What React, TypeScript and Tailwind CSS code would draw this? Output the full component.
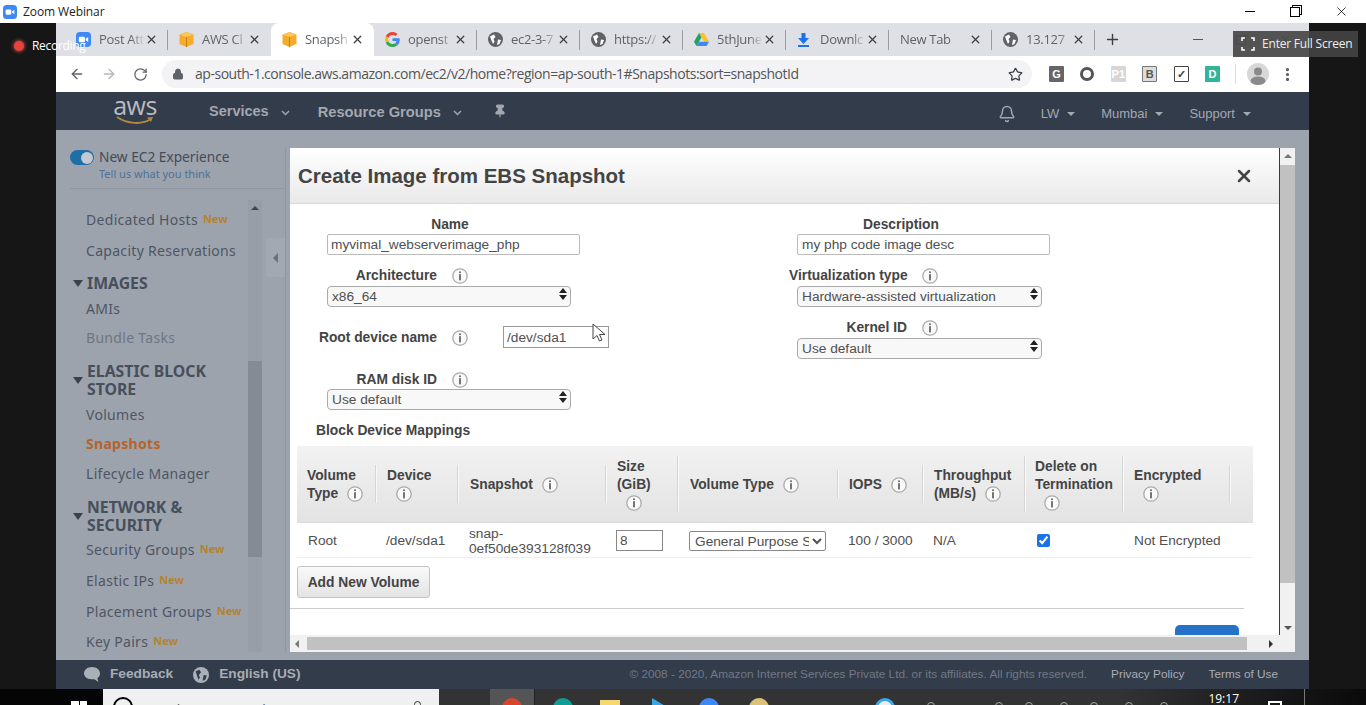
import React from "react";
import { ArrowLeft, ArrowRight, Bell, Lock, MoreVertical, Pin, Plus, RotateCw, Star, X } from "lucide-react";

const InfoIcon = () => (
    <svg width="16" height="16" viewBox="0 0 16 16" className="shrink-0">
        <circle cx="8" cy="8" r="7.2" fill="#fafafa" stroke="#aaa" strokeWidth="1.3" />
        <rect x="7.2" y="3.4" width="1.6" height="1.7" fill="#555" />
        <rect x="7.2" y="6.2" width="1.6" height="6.2" fill="#555" />
    </svg>
);

const Cube = () => (
    <svg width="15" height="17" viewBox="0 0 15 17" className="shrink-0">
        <path d="M7.5 1 14.5 3.5V13L7.5 16 .5 13V3.5Z" fill="#f5ab2c" />
        <path d="M.5 3.5 7.5 6 14.5 3.5 7.5 1Z" fill="#fbc55f" />
        <path d="M7 6h1v10H7z" fill="#c87f12" />
    </svg>
);

const GlobeIcon = () => (
    <svg width="15" height="15" viewBox="0 0 15 15" className="shrink-0">
        <circle cx="7.5" cy="7.5" r="7.5" fill="#5f6368" />
        <path d="M2 4.5 6 2.5 7.5 5 5.5 7 6.5 9.5 5 12 3.5 8.5ZM10 7.5l3 .5-1.5 4-2.5 1Z" fill="#fff" />
    </svg>
);

const ZoomIcon = ({ size }: { size: number }) => (
    <svg width={size} height={size} viewBox="0 0 16 16" className="shrink-0">
        <rect width="16" height="16" rx="4" fill="#3d8af7" />
        <rect x="3" y="5" width="6.5" height="6" rx="1.2" fill="#fff" />
        <path d="M10.3 7.3 13 5.3v5.4L10.3 8.7Z" fill="#fff" />
    </svg>
);

const GoogleIcon = () => (
    <svg width="15" height="15" viewBox="0 0 48 48" className="shrink-0">
        <path fill="#EA4335" d="M24 9.5c3.5 0 6.7 1.2 9.2 3.600l6.900-6.900C35.900 2.400 30.400 0 24 0 14.600 0 6.500 5.400 2.600 13.200l8 6.200C12.500 13.600 17.800 9.500 24 9.500z" />
        <path fill="#4285F4" d="M47 24.500c0-1.600-.1-3.100-.4-4.500H24v9h12.900c-.6 3-2.200 5.500-4.700 7.200l7.700 6C44.400 38 47 31.800 47 24.500z" />
        <path fill="#FBBC05" d="M10.600 28.600a14.500 14.500 0 0 1 0-9.200l-8-6.200a24 24 0 0 0 0 21.600z" />
        <path fill="#34A853" d="M24 48c6.500 0 11.900-2.100 15.900-5.800l-7.700-6c-2.200 1.400-4.900 2.300-8.200 2.300-6.200 0-11.500-4.100-13.400-9.900l-8 6.200C6.500 42.600 14.600 48 24 48z" />
    </svg>
);

const DriveIcon = () => (
    <svg width="15" height="14" viewBox="0 0 15 14" className="shrink-0">
        <path d="M5 0h5l5 8.800h-5Z" fill="#fbc02d" />
        <path d="M5 0 0 8.800 2.500 13 7.500 4.400Z" fill="#1ea362" />
        <path d="M2.500 13h10L15 8.800H5Z" fill="#4285f4" />
    </svg>
);

const DownloadIcon = () => (
    <svg width="13" height="14" viewBox="0 0 13 14" className="shrink-0">
        <path d="M4.500 0h4v5h3.500l-5.500 6L1 5h3.500Z" fill="#1a73e8" />
        <rect x="1" y="12" width="11" height="2" fill="#1a73e8" />
    </svg>
);

type TabInfo = { title: string; icon: React.ReactNode; active?: boolean; sep?: boolean };

// titles stop where the browser fades them out
const tabs: TabInfo[] = [
    { title: "Post Att", icon: <ZoomIcon size={15} />, sep: true },
    { title: "AWS Cl", icon: <Cube /> },
    { title: "Snapsh", icon: <Cube />, active: true },
    { title: "openst", icon: <GoogleIcon />, sep: true },
    { title: "ec2-3-7", icon: <GlobeIcon />, sep: true },
    { title: "https://", icon: <GlobeIcon />, sep: true },
    { title: "5thJune", icon: <DriveIcon />, sep: true },
    { title: "Downlc", icon: <DownloadIcon />, sep: true },
    { title: "New Tab", icon: null, sep: true },
    { title: "13.127", icon: <GlobeIcon />, sep: true },
];

const Tab = ({ tab }: { tab: TabInfo }) => (
    <div className={`w-[103px] h-full flex items-center pl-[11px] relative ${tab.active ? "bg-white rounded-t-lg" : ""}`}>
        {tab.icon && <div className="w-[23px] shrink-0 flex items-center">{tab.icon}</div>}
        <div className="flex-1 whitespace-nowrap text-[13px] text-[#5f6368] font-['Open_Sans',sans-serif] tracking-[-0.3px] [mask-image:linear-gradient(to_right,black_70%,transparent_100%)]">
            {tab.title}
        </div>
        <X size={13} strokeWidth={2.4} className="shrink-0 text-[#3c4043]" />
        <div className={`w-px h-[20px] ml-[9px] shrink-0 ${tab.sep ? "bg-[#9a9aa0]" : ""}`} />
    </div>
);

const ExtIcon = ({ label, cls }: { label: string; cls: string }) => (
    <div className={`w-[15px] h-[16px] flex items-center justify-center text-[11px] font-bold rounded-[1px] ${cls}`}>{label}</div>
);

const Caret = ({ cls }: { cls: string }) => <span className={`block w-0 h-0 border-x-[4px] border-x-transparent border-t-[4px] ${cls}`} />;

const Chevron = () => (
    <svg width="9" height="6" viewBox="0 0 9 6" className="mt-[3px]">
        <path d="M1 1l3.500 3.500L8 1" fill="none" stroke="#a2a6ad" strokeWidth="1.500" />
    </svg>
);

const TopNav = () => (
    <div className="h-[38px] bg-[#333c4b] flex items-center shrink-0 text-[#a4a8af]">
        <div className="ml-[59px] w-[40px] h-[34px] flex flex-col items-center">
            <span className="text-[25px] leading-[22px] text-[#b8bbc0] font-['Open_Sans',sans-serif] tracking-[-0.5px]">aws</span>
            <svg width="38" height="9" viewBox="0 0 38 9">
                <path d="M1 1c10 7 25 8 34 2" fill="none" stroke="#b08a45" strokeWidth="2" />
                <path d="M31 1.500l6-.5-2 5Z" fill="#b08a45" />
            </svg>
        </div>
        <span className="ml-[54px] pt-[2px] text-[14.5px] font-bold">Services</span>
        <span className="ml-[12px]"><Chevron /></span>
        <span className="ml-[28px] pt-[2px] text-[14.7px] font-bold">Resource Groups</span>
        <span className="ml-[12px]"><Chevron /></span>
        <Pin size={14} fill="#a4a8af" className="ml-[31px]" />
        <div className="flex-1" />
        <div className="flex items-center pt-[5px]">
            <Bell size={18} className="mr-[25px]" />
            <span className="text-[13px]">LW</span>
            <span className="ml-[8px]"><Caret cls="border-t-[#a4a8af]" /></span>
            <span className="ml-[26px] text-[13px]">Mumbai</span>
            <span className="ml-[8px]"><Caret cls="border-t-[#a4a8af]" /></span>
            <span className="ml-[26px] text-[13px]">Support</span>
            <span className="ml-[8px] mr-[58px]"><Caret cls="border-t-[#a4a8af]" /></span>
        </div>
    </div>
);

const NewBadge = () => <span className="ml-[5px] text-[11px] font-bold text-[#b3842e] tracking-normal">New</span>;

const NavItem = ({ label, badge, cls = "text-[#4f5663]", mt = "" }: { label: string; badge?: boolean; cls?: string; mt?: string }) => (
    <div className={`h-[24px] flex items-center pl-[14px] text-[14px] tracking-[0.3px] whitespace-nowrap ${mt} ${cls}`}>
        {label}{badge && <NewBadge />}
    </div>
);

const NavSection = ({ lines, mt }: { lines: string[]; mt: string }) => (
    <div className={`flex items-center text-[#484f5c] font-bold text-[15.8px] leading-[18px] ${mt}`}>
        <span className="w-0 h-0 ml-[1px] border-x-[5px] border-x-transparent border-t-[7px] border-t-[#3c424d]" />
        <div className="ml-[4px]">
            {lines.map((l) => <div key={l}>{l}</div>)}
        </div>
    </div>
);

const Sidebar = () => (
    <div className="w-[234px] shrink-0 flex flex-col relative font-['Noto_Sans',sans-serif]">
        <div className="mt-[20px] ml-[14px] mr-[4px] border-b border-[#8f96a1] h-[39px] flex items-start">
            <div className="w-[24px] h-[15px] mt-0 rounded-full bg-[#1f6ea5] flex items-center justify-end pr-[1px]">
                <div className="w-[12px] h-[12px] rounded-full bg-[#c4c9cf]" />
            </div>
            <div className="ml-[5px] -mt-[2px]">
                <div className="text-[13.7px] leading-[18px] text-[#444b57]">New EC2 Experience</div>
                <div className="text-[11px] leading-[16px] text-[#4d7295]">Tell us what you think</div>
            </div>
        </div>
        <div className="flex-1 flex mt-[11px] ml-[16px] mb-[8px] overflow-hidden">
            <div className="w-[176px] shrink-0 overflow-hidden pt-[7px]">
                <NavItem label="Dedicated Hosts" badge />
                <NavItem label="Capacity Reservations" mt="mt-[7px]" />
                <NavSection lines={["IMAGES"]} mt="mt-[12px]" />
                <NavItem label="AMIs" mt="mt-[4px]" />
                <NavItem label="Bundle Tasks" cls="text-[#6f7681]" mt="mt-[5px]" />
                <NavSection lines={["ELASTIC BLOCK", "STORE"]} mt="mt-[13px]" />
                <NavItem label="Volumes" mt="mt-[4px]" />
                <NavItem label="Snapshots" cls="text-[#b5642c] font-bold" mt="mt-[5px]" />
                <NavItem label="Lifecycle Manager" mt="mt-[6px]" />
                <NavSection lines={["NETWORK &", "SECURITY"]} mt="mt-[13px]" />
                <NavItem label="Security Groups" badge mt="mt-[3px]" />
                <NavItem label="Elastic IPs" badge mt="mt-[7px]" />
                <NavItem label="Placement Groups" badge mt="mt-[7px]" />
                <NavItem label="Key Pairs" badge mt="mt-[6px]" />
            </div>
            <div className="w-[14px] bg-[#979ea8] flex flex-col items-center pt-[6px]">
                <span className="w-0 h-0 border-x-[4px] border-x-transparent border-b-[4px] border-b-[#3f4550]" />
                <div className="w-full h-[196px] mt-[151px] bg-[#858b95]" />
            </div>
            <div className="flex-1" />
        </div>
        <div className="absolute right-[5px] top-[108px] w-[19px] h-[39px] bg-[#a2a9b2] rounded-l-sm flex items-center justify-center">
            <span className="w-0 h-0 border-y-[5px] border-y-transparent border-r-[5px] border-r-[#6a717c]" />
        </div>
        <div className="absolute right-[4px] top-[18px] bottom-[8px] w-px bg-[#8f96a1]" />
    </div>
);

const Updown = () => (
    <svg width="8" height="12" viewBox="0 0 8 12" className="absolute right-[4px] top-[4px] pointer-events-none">
        <path d="M4 0 8 5H0ZM4 12 0 7h8Z" fill="#222" />
    </svg>
);

const MacSelect = ({ value, cls }: { value: string; cls: string }) => (
    <div className={`relative h-[21px] ${cls}`}>
        <select defaultValue={value} className="appearance-none w-full h-full border border-[#aaa] rounded-[4px] bg-[#f8f8f8] pl-[4px] text-[13.7px] text-[#505050]">
            <option>{value}</option>
        </select>
        <Updown />
    </div>
);

const FormLabel = ({ label, w }: { label: string; w: string }) => (
    <div className="flex items-center h-[16px]">
        <div className={`${w} pt-[2px] text-right text-[13.8px] font-bold text-[#444] whitespace-nowrap`}>{label}</div>
        <div className="ml-[15px] pt-[1px]"><InfoIcon /></div>
    </div>
);

const LeftForm = () => (
    <div className="w-[499px] shrink-0">
        <div className="ml-[37px] w-[246px] h-[16px] pt-[1px] text-center text-[13.8px] leading-[16px] font-bold text-[#444]">Name</div>
        <input readOnly value="myvimal_webserverimage_php" className="block mt-[2px] ml-[37px] w-[253px] h-[21px] border border-[#bbb] rounded-[2px] pl-[3px] text-[13.7px] text-[#505050]" />
        <div className="mt-[12px]"><FormLabel label="Architecture" w="w-[147px]" /></div>
        <MacSelect value="x86_64" cls="mt-[1px] ml-[37px] w-[244px]" />
        <div className="mt-[21px] flex items-center h-[22px]">
            <div className="w-[147px] pt-[2px] text-right text-[13.8px] font-bold text-[#444]">Root device name</div>
            <div className="ml-[15px] pt-[1px]"><InfoIcon /></div>
            <input readOnly value="/dev/sda1" className="ml-[35px] w-[106px] h-[22px] border border-[#999] pl-[3px] text-[13.7px] text-[#505050]" />
        </div>
        <div className="mt-[23px]"><FormLabel label="RAM disk ID" w="w-[147px]" /></div>
        <MacSelect value="Use default" cls="ml-[37px] w-[244px] mb-[2px]" />
    </div>
);

const RightForm = () => (
    <div className="flex-1">
        <div className="w-[224px] h-[16px] pt-[1px] text-center text-[13.8px] leading-[16px] font-bold text-[#444]">Description</div>
        <input readOnly value="my php code image desc" className="block mt-[2px] ml-[8px] w-[253px] h-[21px] border border-[#bbb] rounded-[2px] pl-[4px] text-[13.7px] text-[#505050]" />
        <div className="mt-[12px]"><FormLabel label="Virtualization type" w="w-[118px]" /></div>
        <MacSelect value="Hardware-assisted virtualization" cls="mt-[1px] ml-[8px] w-[245px]" />
        <div className="mt-[14px]"><FormLabel label="Kernel ID" w="w-[118px]" /></div>
        <MacSelect value="Use default" cls="mt-[1px] ml-[8px] w-[245px]" />
    </div>
);

type Col = { lines: string[]; iconInline?: boolean; pl: string; sep: string };

const columns: Col[] = [
    { lines: ["Volume", "Type"], iconInline: true, pl: "pl-[10px]", sep: "h-[38px]" },
    { lines: ["Device"], pl: "pl-[10px]", sep: "h-[38px]" },
    { lines: ["Snapshot"], iconInline: true, pl: "pl-[11px]", sep: "h-[38px]" },
    { lines: ["Size", "(GiB)"], pl: "pl-[10px]", sep: "h-[56px]" },
    { lines: ["Volume Type"], iconInline: true, pl: "pl-[11px]", sep: "h-[28px]" },
    { lines: ["IOPS"], iconInline: true, pl: "pl-[10px]", sep: "h-[38px]" },
    { lines: ["Throughput", "(MB/s)"], iconInline: true, pl: "pl-[10px]", sep: "h-[56px]" },
    { lines: ["Delete on", "Termination"], pl: "pl-[9px]", sep: "h-[56px]" },
    { lines: ["Encrypted"], pl: "pl-[10px]", sep: "h-[38px]" },
];

const HeadCell = ({ col }: { col: Col }) => (
    <div className="flex items-center">
        <div className={`flex-1 pt-[2px] text-[13.8px] leading-[18px] font-bold text-[#444] ${col.pl}`}>
            {col.lines.map((l, i) => (
                <div key={l} className="flex items-center whitespace-nowrap">
                    {l}
                    {col.iconInline && i === col.lines.length - 1 && <span className="ml-[9px]"><InfoIcon /></span>}
                </div>
            ))}
            {!col.iconInline && <div className="flex h-[18px] items-center pl-[9px]"><InfoIcon /></div>}
        </div>
        <div className={`w-[2px] shrink-0 bg-[#f8f8f8] border-l border-[#d6d6d6] ${col.sep}`} />
    </div>
);

const gridCols = "grid grid-cols-[80px_82px_148px_72px_160px_85px_102px_98px_107px_22px]";

const VolumeTable = () => (
    <div className="mt-[8px] ml-[7px] w-[956px]">
        <div className={`${gridCols} h-[77px] bg-gradient-to-b from-[#f2f2f2] to-[#e3e3e4] border-b border-[#dcdcdc]`}>
            {columns.map((c) => <HeadCell key={c.lines[0] + c.sep} col={c} />)}
            <div />
        </div>
        <div className={`${gridCols} h-[35px] items-center border-b border-[#eee] text-[13.7px] text-[#505050]`}>
            <div className="pl-[11px] pt-[2px]">Root</div>
            <div className="pl-[9px] pt-[2px]">/dev/sda1</div>
            <div className="pl-[10px] pt-[1px] leading-[15px]">snap-<br />0ef50de393128f039</div>
            <div className="pl-[9px]">
                <input readOnly value="8" className="w-[47px] h-[21px] border border-[#888] pl-[3px] text-[13.7px] block" />
            </div>
            <div className="pl-[10px] pt-[2px]">
                <select defaultValue="gp2" className="block w-[137px] h-[20px] border border-[#888] rounded-[2px] pl-[1px] text-[13.7px] bg-white">
                    <option value="gp2">General Purpose SSD (gp2)</option>
                </select>
            </div>
            <div className="pl-[9px] pt-[2px]">100 / 3000</div>
            <div className="pl-[9px] pt-[2px]">N/A</div>
            <div className="pl-[11px] flex items-center">
                <input type="checkbox" readOnly checked className="w-[13px] h-[13px] accent-[#1a73e8]" />
            </div>
            <div className="pl-[10px] pt-[2px] whitespace-nowrap">Not Encrypted</div>
            <div />
        </div>
    </div>
);

const CreateImageModal = () => (
    <div className="flex-1 flex flex-col mt-[18px] mb-[8px] mr-[14px] bg-white font-['Liberation_Sans',sans-serif] overflow-hidden">
        <div className="flex-1 flex min-h-0">
            <div className="flex-1 min-w-0 overflow-hidden">
                <div className="h-[56px] flex items-center justify-between pl-[8px] pr-[25px] bg-gradient-to-b from-white to-[#e9e9ea] border-b border-[#d8d8d8]">
                    <span className="pt-[2px] text-[20.5px] font-bold text-[#444]">Create Image from EBS Snapshot</span>
                    <X size={20} strokeWidth={3} className="text-[#444]" />
                </div>
                <div className="flex pt-[12px]">
                    <LeftForm />
                    <RightForm />
                </div>
                <div className="mt-[12px] ml-[26px] h-[16px] pt-[1px] text-[13.8px] leading-[16px] font-bold text-[#444]">Block Device Mappings</div>
                <VolumeTable />
                <button className="block mt-[8px] ml-[7px] w-[133px] h-[32px] pt-[2px] rounded-[3px] border border-[#c4c4c4] bg-gradient-to-b from-[#f9f9f9] to-[#e4e4e4] text-[13.8px] font-bold text-[#444]">
                    Add New Volume
                </button>
                <div className="mt-[10px] mr-[35px] border-t border-[#ccc]" />
                <div className="mt-[16px] ml-[885px] w-[64px] h-[30px] rounded-t-[5px] bg-[#2672c9]" />
            </div>
            <div className="w-[1px] bg-[#3a3a3c] shrink-0" />
            <div className="w-[15px] shrink-0 bg-[#f1f1f1] flex flex-col items-center">
                <span className="mt-[6px] w-0 h-0 border-x-[4px] border-x-transparent border-b-[4px] border-b-[#777]" />
                <div className="mt-[7px] w-full h-[418px] bg-[#c1c1c1]" />
                <div className="flex-1" />
                <span className="mb-[5px] w-0 h-0 border-x-[4px] border-x-transparent border-t-[4px] border-t-[#555]" />
            </div>
        </div>
        <div className="h-[17px] shrink-0 bg-[#f1f1f1] flex items-center">
            <span className="ml-[5px] w-0 h-0 border-y-[4px] border-y-transparent border-r-[4px] border-r-[#777]" />
            <div className="ml-[8px] w-[940px] h-[13px] bg-[#c1c1c1]" />
            <div className="flex-1" />
            <span className="mr-[22px] w-0 h-0 border-y-[4px] border-y-transparent border-l-[4px] border-l-[#333]" />
        </div>
    </div>
);

const Footer = () => (
    <div className="h-[29px] shrink-0 bg-[#333c4b] flex items-center font-['Liberation_Sans',sans-serif]">
        <svg width="18" height="18" viewBox="0 0 18 18" className="ml-[27px]">
            <path d="M9 1c4.700 0 8 2.900 8 6.500 0 2-1 3.700-2.600 4.800l1 3.700-4-2.700C5 13.800 1 11.200 1 7.500 1 3.900 4.300 1 9 1Z" fill="#a9b0b8" />
        </svg>
        <span className="ml-[9px] text-[13.7px] font-bold text-[#a9adb4]">Feedback</span>
        <svg width="16" height="16" viewBox="0 0 15 15" className="ml-[20px]">
            <circle cx="7.5" cy="7.5" r="7.5" fill="#a9b0b8" />
            <path d="M2.500 4 6 2.500 7.500 5 5.500 7.500 6.500 10 5 12ZM10 7.500l3 .5-1.500 4-2.500 1Z" fill="#333c4b" />
        </svg>
        <span className="ml-[10px] text-[13.7px] font-bold text-[#a9adb4]">English (US)</span>
        <div className="flex-1" />
        <span className="text-[11.8px] text-[#717986]">© 2008 - 2020, Amazon Internet Services Private Ltd. or its affiliates. All rights reserved.</span>
        <span className="ml-[24px] text-[11.8px] text-[#a9adb4]">Privacy Policy</span>
        <span className="ml-[24px] mr-[31px] text-[11.8px] text-[#a9adb4]">Terms of Use</span>
    </div>
);

const TaskIcon = ({ cls, ml }: { cls: string; ml: string }) => <div className={`w-[20px] h-[20px] shrink-0 mt-[9px] ${ml} ${cls}`} />;

const TrayIcon = ({ ml }: { ml: string }) => <div className={`w-[8px] h-[8px] shrink-0 mt-[13px] rounded-t-sm border border-[#aaa] ${ml}`} />;

const Taskbar = () => (
    <div className="h-[16px] shrink-0 flex overflow-hidden bg-gradient-to-r from-[#333] via-[#333] via-[82%] to-[#0a0a0a] font-['Open_Sans',sans-serif]">
        <div className="w-[103px] bg-[#050505] shrink-0 pl-[71px] pt-[12px]">
            <div className="w-[16px] h-[16px] grid grid-cols-2 gap-[1px]">
                <div className="bg-white" /><div className="bg-white" /><div className="bg-white" /><div className="bg-white" />
            </div>
        </div>
        <div className="w-[336px] shrink-0 bg-[#f0f0f0] flex pl-[10px] pt-[8px]">
            <div className="w-[20px] h-[20px] rounded-full border-[2px] border-black shrink-0" />
            <span className="ml-[9px] mt-[2px] text-[14px] text-[#555] whitespace-nowrap">Type here to search</span>
            <div className="flex-1" />
            <div className="w-[7px] h-[14px] mr-[18px] mt-[4px] rounded-sm border border-[#333] shrink-0" />
        </div>
        <div className="w-[51px] shrink-0" />
        <div className="w-[45px] shrink-0 bg-[#555] border-r border-[#222] flex justify-center pt-[9px]">
            <div className="w-[20px] h-[20px] rounded-full bg-[#d8452f]" />
        </div>
        <TaskIcon ml="ml-[18px]" cls="rounded-full bg-[#0f9d94]" />
        <TaskIcon ml="ml-[27px]" cls="bg-[#f5d774] mt-[11px]" />
        <TaskIcon ml="ml-[32px]" cls="bg-[#3aa6e8] [clip-path:polygon(0_0,100%_60%,0_100%)]" />
        <TaskIcon ml="ml-[27px]" cls="rounded-full bg-[#3d8af7]" />
        <TaskIcon ml="ml-[30px]" cls="rounded-full bg-[#d9c27a]" />
        <TaskIcon ml="ml-[106px]" cls="rounded-full bg-[#e8f0f5] border-[3px] border-[#3aa6e8]" />
        <TrayIcon ml="ml-[32px]" />
        <TrayIcon ml="ml-[60px]" />
        <TrayIcon ml="ml-[22px]" />
        <TrayIcon ml="ml-[27px]" />
        <TrayIcon ml="ml-[22px]" />
        <TrayIcon ml="ml-[27px]" />
        <TrayIcon ml="ml-[27px]" />
        <div className="flex-1" />
        <span className="text-[12px] leading-[12px] mt-[4px] mr-[4px] text-white">19:17</span>
        <div className="w-[14px] h-[14px] ml-[25px] mt-[12px] border-2 border-white shrink-0" />
        <div className="w-px ml-[22px] mr-[61px] bg-[#777] shrink-0" />
    </div>
);

const App = () => {
    return (
        <div className="w-[1366px] h-[705px] relative flex flex-col overflow-hidden bg-[#161616] font-['Liberation_Sans',sans-serif]">
            <div className="h-[23px] shrink-0 bg-white flex items-center pl-[3px]">
                <ZoomIcon size={14} />
                <span className="ml-[6px] text-[12px] text-[#222] font-['Open_Sans',sans-serif] tracking-[-0.1px]">Zoom Webinar</span>
                <div className="flex-1" />
                <div className="w-[10px] h-px bg-black mr-[35px]" />
                <div className="w-[10px] h-[10px] border border-black mr-[34px] shadow-[2px_-2px_0_-1px_#fff,2px_-2px_0_0_#000]" />
                <X size={15} strokeWidth={1.2} className="text-black mr-[17px]" />
            </div>

            <div className="flex-1 flex min-h-0 ml-[56px] mr-[57px]">
                <div className="flex-1 flex flex-col min-w-0 bg-[#9ca3ad]">
                    <div className="h-[33px] shrink-0 bg-[#dfe0e6] flex items-center pl-[9px]">
                        {tabs.map((t) => <Tab key={t.title} tab={t} />)}
                        <Plus size={17} strokeWidth={2} className="ml-[9px] text-[#3c4043]" />
                        <div className="w-[10px] h-px bg-[#555] ml-[72px]" />
                        <div className="w-[10px] h-[10px] border border-[#888] ml-[33px]" />
                        <X size={13} strokeWidth={1.2} className="ml-[33px] text-[#444]" />
                    </div>

                    <div className="h-[36px] shrink-0 bg-white flex items-center">
                        <ArrowLeft size={16} strokeWidth={2} className="ml-[13px] text-[#5f6368]" />
                        <ArrowRight size={16} strokeWidth={2} className="ml-[16px] text-[#b5b7ba]" />
                        <RotateCw size={15} strokeWidth={2} className="ml-[16px] text-[#5f6368]" />
                        <div className="ml-[14px] w-[870px] h-[28px] rounded-full bg-[#f3f3f6] flex items-center pl-[10px]">
                            <Lock size={12} fill="#5f6368" strokeWidth={2} className="text-[#5f6368]" />
                            <span className="ml-[11px] pb-[2px] text-[14px] text-[#555] font-['Open_Sans',sans-serif] tracking-[-0.47px] whitespace-nowrap">ap-south-1.console.aws.amazon.com/ec2/v2/home?region=ap-south-1#Snapshots:sort=snapshotId</span>
                            <div className="flex-1" />
                            <Star size={15} strokeWidth={2} className="mr-[9px] text-[#3c4043]" />
                        </div>
                        <div className="ml-[17px] flex items-center gap-[16.4px]">
                            <ExtIcon label="G" cls="bg-[#666] text-white" />
                            <div className="w-[14px] h-[14px] rounded-full border-[3px] border-[#555] bg-white" />
                            <ExtIcon label="P1" cls="bg-[#d8d5d5] text-white" />
                            <ExtIcon label="B" cls="bg-[#ddd] text-[#555] border border-[#777]" />
                            <ExtIcon label="✓" cls="border border-[#444] text-[#444]" />
                            <ExtIcon label="D" cls="bg-[#31b59a] text-white" />
                        </div>
                        <div className="ml-[15px] w-px h-[20px] bg-[#ddd]" />
                        <div className="ml-[11px] w-[22px] h-[22px] rounded-full bg-[#d8d8d8] overflow-hidden">
                            <svg width="22" height="22" viewBox="0 0 22 22">
                                <circle cx="11" cy="8.500" r="4" fill="#8a8a8a" />
                                <ellipse cx="11" cy="18" rx="7.500" ry="4.500" fill="#8a8a8a" />
                            </svg>
                        </div>
                        <MoreVertical size={17} strokeWidth={2.5} className="ml-[10px] text-[#555]" />
                    </div>

                    <TopNav />

                    <div className="flex-1 flex min-h-0">
                        <Sidebar />
                        <CreateImageModal />
                    </div>

                    <Footer />
                </div>
            </div>

            <Taskbar />

            {/* zoom's own overlays sit on top of the shared screen */}
            <div className="absolute left-[14px] top-[37px] flex items-center text-[12px] text-white font-['Open_Sans',sans-serif]">
                <div className="w-[10px] h-[10px] rounded-full bg-[#e8423a] shadow-[0_0_4px_#f66]" />
                <span className="ml-[8px] tracking-[-0.3px]">Recording</span>
            </div>
            <div className="absolute left-[1233px] top-[31px] w-[125px] h-[26px] bg-[#444]/90 flex items-center pl-[8px] text-[12px] text-[#eee] font-['Open_Sans',sans-serif]">
                <svg width="14" height="14" viewBox="0 0 14 14" fill="none" stroke="#fff" strokeWidth="1.600">
                    <path d="M1 4V1h3M10 1h3v3M13 10v3h-3M4 13H1v-3" />
                </svg>
                <span className="ml-[7px] tracking-[-0.2px] whitespace-nowrap">Enter Full Screen</span>
            </div>
            <svg width="15" height="20" viewBox="0 0 15 20" className="absolute left-[592px] top-[323px]">
                <path d="M1 1v15l4-3.500 2.500 5.500 2.500-1-2.500-5.500H13Z" fill="#fff" stroke="#444" strokeWidth="1" />
            </svg>
        </div>
    );
};

export default App;
